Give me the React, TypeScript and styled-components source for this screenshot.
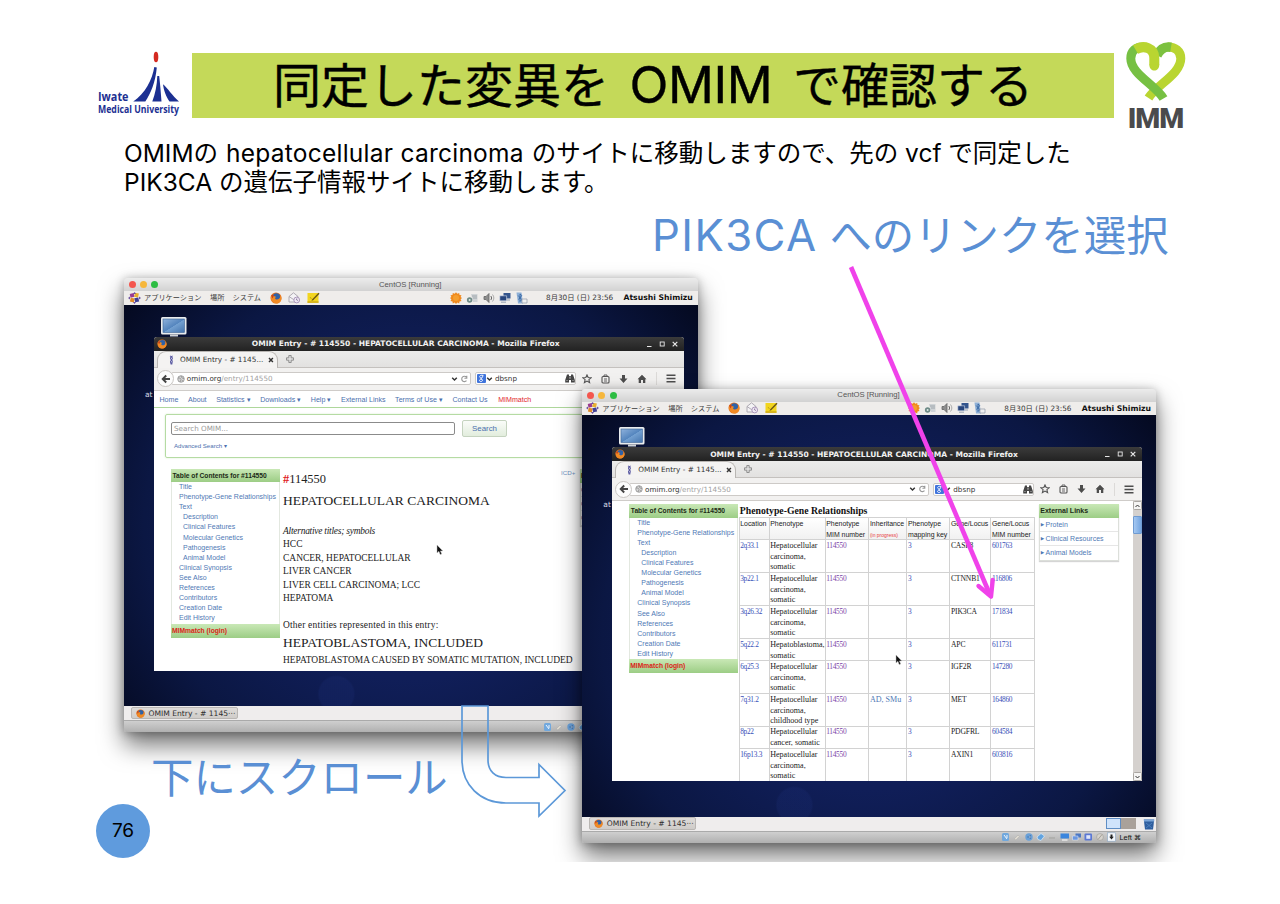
import React from "react";
import styled, { createGlobalStyle, css } from "styled-components";

const GlobalStyle = createGlobalStyle`
  body { margin: 0; background: #fff; }
  * { box-sizing: border-box; }
`;

const ui = `"DejaVu Sans", "Noto Sans CJK JP", sans-serif`;
const sans = `"Liberation Sans", Arial, sans-serif`;
const serif = `"Liberation Serif", "Times New Roman", serif`;
const round = `Inter, "Noto Sans CJK JP", sans-serif`;

/* ---------- slide ---------- */

const Slide = styled.main`
  position: relative;
  width: 1280px;
  height: 904px;
  overflow: hidden;
  background: #fff;
  font-family: ${round};
  color: #000;
`;

const Header = styled.header`
  display: flex;
  align-items: flex-start;
  height: 134px;
  padding: 45px 0 0 96px;
`;

const University = styled.div`
  width: 96px;
  height: 76px;
`;

const Banner = styled.h1`
  width: 922px;
  height: 65px;
  margin: 8px 0 0;
  background: #c4d959;
  font-size: 48px;
  font-weight: 400;
  line-height: 65px;
  text-align: center;
  white-space: pre;
  -webkit-text-stroke: 0.4px #000;
`;

const Latin = styled.span<{ $track?: number; $size?: number; $gap?: number }>`
  margin: 0 ${(p) => p.$gap ?? 0}px;
  font-size: ${(p) => p.$size ?? 1}em;
  line-height: 1;
  letter-spacing: ${(p) => p.$track ?? 0}px;
`;

const Imm = styled.div`
  display: flex;
  flex-direction: column;
  align-items: center;
  width: 83px;
  margin-top: -6px;
`;

const ImmName = styled.div`
  margin-top: 1px;
  color: #4a4a4c;
  font: 900 28.5px/29px Roboto, sans-serif;
  letter-spacing: -1px;
`;

const Lead = styled.p`
  margin: 5px 0 0 124px;
  font-size: 24.5px;
  line-height: 29px;
  white-space: pre;
`;

const Callout = styled.div<{ $x: number; $y: number }>`
  position: absolute;
  left: ${(p) => p.$x}px;
  top: ${(p) => p.$y}px;
  color: #5a8fd4;
  font-size: 42.4px;
  line-height: 54px;
  white-space: pre;
`;

const PageNumber = styled.div`
  position: absolute;
  left: 96px;
  top: 804px;
  display: flex;
  align-items: center;
  justify-content: center;
  width: 54px;
  height: 54px;
  padding-bottom: 2px;
  border-radius: 50%;
  background: #5f9bdd;
  font-size: 19px;
`;

const Canvas = styled.section`
  position: absolute;
  inset: 200px 0 42px;
  overflow: hidden;
`;

const Overlay = styled.svg`
  position: absolute;
  inset: 0;
  pointer-events: none;
`;

/* ---------- virtual machine window ---------- */

const Machine = styled.article<{ $x: number; $y: number }>`
  position: absolute;
  left: ${(p) => p.$x}px;
  top: ${(p) => p.$y}px;
  display: flex;
  flex-direction: column;
  width: 573.5px;
  height: 454px;
  border-radius: 3px 3px 2px 2px;
  background: #d6d6d6;
  box-shadow: 0 13px 24px rgba(0, 0, 0, 0.55), 0 1px 10px rgba(0, 0, 0, 0.28);
`;

const TitleBar = styled.div`
  display: flex;
  align-items: center;
  height: 13px;
  padding: 0 5px;
  border-radius: 3px 3px 0 0;
  background: linear-gradient(#ececec, #d2d2d2);
`;

const Lights = styled.div`
  display: flex;
  gap: 4.2px;
  width: 60px;
`;

const Light = styled.i<{ $c: string }>`
  width: 7px;
  height: 7px;
  border-radius: 50%;
  background: ${(p) => p.$c};
`;

const MachineTitle = styled.div`
  flex: 1;
  padding-right: 61px;
  color: #555;
  font: 7.7px/12px ${sans};
  text-align: center;
`;

const Panel = styled.div`
  display: flex;
  align-items: center;
  height: 13.7px;
  padding: 0 4px 0 4px;
  background: #efedeb;
  color: #3a3a3a;
  font: 7.2px/13px ${ui};
  white-space: nowrap;
`;

const Launcher = styled.div`
  display: flex;
  align-items: center;
  gap: 6px;
  margin-left: 8.5px;
`;

const PanelLabel = styled.span<{ $w: number }>`
  width: ${(p) => p.$w}px;
`;

const Tray = styled.div`
  display: flex;
  align-items: center;
  gap: 4px;
  margin-left: auto;
`;

const Clock = styled.span`
  width: 77.5px;
  margin-left: 14px;
  font-size: 7.3px;
`;

const User = styled.b`
  width: 70px;
  color: #111;
  font-size: 7.7px;
`;

const Desktop = styled.div`
  position: relative;
  flex: 1;
  overflow: hidden;
  padding: 32px 0 0 30px;
  background: radial-gradient(circle at 37% 97%, rgba(40, 62, 150, 0.14) 0 17px, transparent 19px),
    radial-gradient(ellipse 62% 85% at 50% 55%, #12215f 0%, #101e58 45%, #0b1743 75%, #03071a 108%);
`;

const MonitorIcon = styled.svg`
  position: absolute;
  left: 36px;
  top: 11px;
`;

const DesktopLabel = styled.span`
  position: absolute;
  left: 21px;
  top: 84px;
  color: #d8dbe6;
  font: 7.5px/11px ${ui};
`;

const TaskBar = styled.div`
  display: flex;
  align-items: center;
  justify-content: space-between;
  height: 14px;
  padding-left: 7px;
  background: #efeded;
`;

const Task = styled.div`
  display: flex;
  align-items: center;
  gap: 4px;
  width: 107px;
  height: 12.5px;
  padding-left: 3.5px;
  border: 1px solid #b9b6b3;
  border-radius: 2px;
  background: linear-gradient(#dedbd8, #cfccc9);
  color: #2d2d2d;
  font: 7.6px/11px ${ui};
  white-space: nowrap;
`;

const Pager = styled.div`
  display: flex;
  align-items: center;
  height: 14px;
`;

const Workspace = styled.i<{ $on?: boolean }>`
  width: 15px;
  height: 11.5px;
  border: 1px solid ${(p) => (p.$on ? "#5e8dc4" : "#a9a19a")};
  background: ${(p) => (p.$on ? "#cfe3fb" : "#a9a19a")};
`;

const StatusBar = styled.div`
  display: flex;
  align-items: center;
  justify-content: flex-end;
  gap: 2.6px;
  height: 12px;
  padding-right: 15px;
  border-top: 1px solid #aaa;
  border-radius: 0 0 2px 2px;
  background: linear-gradient(#cfcfcf, #b0b0b0);
  color: #111;
  font: 7.4px/11px ${sans};
`;

/* ---------- firefox ---------- */

const Browser = styled.div`
  display: flex;
  flex-direction: column;
  width: 529.5px;
  height: 334px;
  border-radius: 3px 3px 0 0;
  background: #fff;
  overflow: hidden;
`;

const Caption = styled.div`
  display: flex;
  align-items: center;
  flex: none;
  height: 14px;
  padding: 0 5px 0 3px;
  background: linear-gradient(#3b3b3b, #222);
  color: #f2f2f2;
  font: bold 7.55px/13px ${ui};
  white-space: nowrap;
`;

const CaptionText = styled.span`
  flex: 1;
  text-align: center;
`;

const TabStrip = styled.div`
  display: flex;
  align-items: flex-end;
  flex: none;
  height: 17px;
  padding-left: 3px;
  border-bottom: 1px solid #c4c1be;
  background: linear-gradient(#ececeb, #e2e1e0);
`;

const Tab = styled.div`
  display: flex;
  align-items: center;
  width: 121px;
  height: 17px;
  margin-bottom: -1px;
  padding: 0 3px 0 11px;
  border: 1px solid #b9b6b3;
  border-bottom: 0;
  border-radius: 9px 9px 0 0;
  background: #f4f3f2;
  color: #333;
  font: 7.3px/14px ${ui};
  white-space: nowrap;
`;

const TabText = styled.span`
  width: 90px;
  margin-left: 6px;
`;

const NavBar = styled.div`
  display: flex;
  align-items: center;
  flex: none;
  height: 23px;
  padding-left: 3px;
  border-bottom: 1px solid #cfccc9;
  background: #f2f1f0;
`;

const Back = styled.div`
  display: flex;
  align-items: center;
  justify-content: center;
  z-index: 1;
  width: 17px;
  height: 17px;
  border: 1px solid #c9c6c3;
  border-radius: 50%;
  background: #fcfcfc;
`;

const Field = styled.div<{ $w: number }>`
  display: flex;
  align-items: center;
  width: ${(p) => p.$w}px;
  height: 12.5px;
  border: 1px solid #cdcac7;
  border-radius: 2px;
  background: #fff;
  color: #333;
  font: 7.2px/11px ${ui};
  white-space: nowrap;
`;

const UrlField = styled(Field)`
  margin-left: -3px;
  padding: 0 1px 0 4.5px;
`;

const SearchField = styled(Field)`
  margin-left: 4px;
  padding-left: 1px;
`;

const Faint = styled.span`
  flex: 1;
  color: #a2a2a2;
`;

const Grow = styled.span`
  flex: 1;
  padding-left: 2px;
`;

const Tools = styled.div`
  display: flex;
  align-items: center;
  justify-content: space-between;
  width: 94px;
  margin-left: 6px;
`;

const Divider = styled.i`
  width: 1px;
  height: 13px;
  background: #dcdad8;
`;

const Viewport = styled.div`
  position: relative;
  flex: 1;
  display: flex;
  flex-direction: column;
  overflow: hidden;
  background: #fff;
`;

const Cursor = styled.svg<{ $x: number; $y: number }>`
  position: absolute;
  left: ${(p) => p.$x}px;
  top: ${(p) => p.$y}px;
`;

/* ---------- OMIM page ---------- */

const SiteNav = styled.nav`
  display: flex;
  align-items: center;
  gap: 9.6px;
  flex: none;
  height: 17px;
  padding: 3px 0 0 5.5px;
  border-bottom: 1px solid #aed79b;
  color: #4b6fae;
  font: 7.1px/13px ${sans};
  white-space: nowrap;
`;

const Hot = styled.span`
  padding-left: 1px;
  color: #e2272b;
`;

const SearchBox = styled.div`
  flex: none;
  height: 44px;
  margin: 6px 11px 0;
  padding: 5px 0 0 5px;
  border: 1px solid #b5dba3;
  border-radius: 2px;
  box-shadow: 0 0 2px #d5ecca;
  color: #4b6fae;
  font: 6.1px/12px ${sans};
`;

const SearchRow = styled.div`
  display: flex;
  align-items: center;
  gap: 7px;
  margin-bottom: 3px;
`;

const SearchInput = styled.div`
  width: 284px;
  height: 13px;
  padding-left: 2px;
  border: 1px solid #8b8b8b;
  border-radius: 2px;
  color: #999;
  font: 7.2px/11px ${ui};
`;

const SearchButton = styled.div`
  width: 45px;
  height: 17px;
  border: 1px solid #c5d3bf;
  border-radius: 2px;
  background: linear-gradient(#fafcf9, #e2eddd);
  color: #4b6fae;
  font: 7.9px/15px ${sans};
  text-align: center;
`;

const Advanced = styled.div`
  padding-left: 3px;
`;

const Columns = styled.div<{ $top: number }>`
  display: flex;
  align-items: flex-start;
  flex: none;
  padding: ${(p) => p.$top}px 0 0 17px;
`;

const greenHead = css`
  background: linear-gradient(#c9e8b6, #9ccd85);
  font: bold 7px/13px ${sans};
`;

const Contents = styled.aside`
  flex: none;
  width: 108.5px;
  border: 1px solid #e3e8e0;
  font: 7px/10.09px ${sans};
  color: #4f79b5;
  white-space: nowrap;
`;

const ContentsHead = styled.div`
  height: 13.4px;
  margin: -1px -1px 0;
  padding-left: 1.5px;
  color: #1c2b16;
  ${greenHead}
  font-size: 6.7px;
`;

const ContentsList = styled.div`
  height: 141.6px;
`;

const ContentsItem = styled.div<{ $sub?: boolean }>`
  padding-left: ${(p) => (p.$sub ? 11 : 7)}px;
`;

const ContentsFoot = styled.div`
  height: 14px;
  margin: 0 -1px -1px;
  padding-left: 1px;
  ${greenHead}
  color: #dc2418;
  font-size: 6.7px;
`;

const Entry = styled.div`
  position: relative;
  flex: none;
  width: 300px;
  padding: 3px 0 0 3.5px;
  color: #222;
  font: 9.46px/13.5px ${serif};
  white-space: nowrap;
`;

const Number = styled.div`
  height: 16px;
  font-size: 12.4px;
  line-height: 14px;
`;

const Hash = styled.b`
  color: #e0201c;
`;

const EntryName = styled.div<{ $before?: number; $after?: number }>`
  margin: ${(p) => p.$before ?? 0}px 0 ${(p) => p.$after ?? 0}px;
  font-size: 13.5px;
  line-height: 20px;
`;

const AltLabel = styled.i`
  display: block;
  letter-spacing: -0.25px;
`;

const Other = styled.div`
  margin-top: 13.5px;
  letter-spacing: 0.2px;
`;

const Icd = styled.span`
  position: absolute;
  left: 281.5px;
  top: -2px;
  color: #6f93c4;
  font: 6.2px/12px ${sans};
`;

const SideLinks = styled.aside<{ $ml: number }>`
  flex: none;
  width: 80.5px;
  margin-left: ${(p) => p.$ml}px;
  border: 1px solid #dcdfda;
  border-top: 0;
  box-shadow: 0 1px 1px #d5d5d5;
  color: #4f79b5;
  font: 7px/14px ${sans};
`;

const SideHead = styled.div`
  height: 14px;
  margin: 0 -1px;
  padding-left: 1.5px;
  color: #1c2b16;
  ${greenHead}
`;

const SideItem = styled.div`
  height: 14px;
  padding-left: 1px;
  border-bottom: 1px solid #e6e6e6;
  &:last-child { border: 0; }
`;

const Bullet = styled.span`
  display: inline-block;
  width: 4.8px;
  font: 4.5px/10px ${ui};
  vertical-align: 1px;
`;

const Relations = styled.div`
  flex: none;
  width: 296px;
  margin-left: 1px;
`;

const RelationsTitle = styled.h2`
  height: 13px;
  margin: 0;
  padding-left: 1px;
  color: #111;
  font: bold 9.75px/13px ${serif};
  white-space: nowrap;
`;

const Row = styled.div<{ $head?: boolean; $h: number }>`
  display: grid;
  grid-template-columns: 30px 56px 43.7px 38px 43px 41px 44px;
  height: ${(p) => p.$h}px;
  border-top: 1px solid #d2d2d2;
  border-left: 1px solid #d2d2d2;
  color: #222;
  font: ${(p) => (p.$head ? `6.95px/11px ${sans}` : `8.05px/10.8px ${serif}`)};
  background: ${(p) => (p.$head ? "linear-gradient(#fff, #f1f1f1)" : "#fff")};
  white-space: nowrap;
`;

const Cell = styled.div<{ $c?: string; $num?: boolean }>`
  padding: 0.6px 0 0 0.4px;
  border-right: 1px solid #d2d2d2;
  color: ${(p) => p.$c ?? "inherit"};
  ${(p) => p.$num && "font-size: 7.4px; letter-spacing: -0.3px;"}
`;

const HeadCell = styled(Cell)`
  padding-top: 0;
`;

const Gene = styled(Cell)`
  font-size: 7.6px;
  letter-spacing: -0.1px;
`;

const Progress = styled.small`
  color: #e8393c;
  font-size: 5px;
`;

const ScrollTrack = styled.div`
  position: absolute;
  right: 0;
  top: 0;
  bottom: 0;
  display: flex;
  flex-direction: column;
  justify-content: space-between;
  width: 9px;
  background: #d5d1ce;
`;

const ScrollButton = styled.div`
  display: flex;
  align-items: center;
  justify-content: center;
  height: 9px;
  border: 1px solid #aaa6a2;
  border-radius: 1.5px;
  background: #f5f4f3;
`;

const Thumb = styled.div`
  height: 17.5px;
  margin: 6px 0 auto;
  border: 1px solid #6f9bd2;
  border-radius: 1px;
  background: linear-gradient(90deg, #a5c8f2, #74a5e0);
`;

/* ---------- icons ---------- */

const FoxIcon = ({ s = 11 }: { s?: number }) => (
  <svg width={s} height={s} viewBox="0 0 12 12">
    <circle cx="6" cy="6" r="5.5" fill="#e2701f" />
    <circle cx="6.4" cy="5" r="3.7" fill="#2f62a8" />
    <path d="M1 4C2 2.6 3.5 4 5 4.2c1 .3 1 1.4 0 1.7.3 1.5 2 2 3.6 1.2 1.3-.8 2-2.5 1.8-4.1 2.2 3.3.9 7-2.2 8.2C4 12.5.2 8.7 1 4z" fill="#f08a24" />
    <path d="M1.2 3.6C2 2.3 3.2 3.3 4 3.6L2.4 6.4z" fill="#c8401a" />
  </svg>
);

const PanelLogo = () => (
  <svg width="13" height="12" viewBox="0 0 13 12">
    <rect x="2" y="1.5" width="4" height="3.8" fill="#9a3b90" transform="rotate(-12 4 3)" />
    <rect x="6.5" y="1" width="4" height="4" fill="#e8b030" transform="rotate(12 8 3)" />
    <rect x="2.3" y="6" width="4" height="4" fill="#e08a28" transform="rotate(12 4 8)" />
    <rect x="6.8" y="5.8" width="4" height="4" fill="#3f3f96" transform="rotate(-12 9 8)" />
    <path d="M0 6l2-1.5v3zM13 6l-2-1.5v3zM6.500 0L8 2H5zM6.500 12L8 10H5z" fill="#6b4fa0" />
  </svg>
);

const MailIcon = () => (
  <svg width="13" height="12" viewBox="0 0 13 12" fill="none" stroke="#a7a3ab" strokeWidth=".9">
    <path d="M1 4.5L5.500.8 10 4.500V10H1z" fill="#f4f3f5" />
    <path d="M1 4.5l4.500 3 4.500-3" />
    <circle cx="8.7" cy="8" r="2.9" fill="#eee8f3" stroke="#a48fb4" />
    <path d="M8.7 6.5V8l1 .6" stroke="#806d94" />
  </svg>
);

const NoteIcon = () => (
  <svg width="13" height="12" viewBox="0 0 13 12">
    <rect x=".5" y="1" width="11" height="9.8" fill="#f2d51f" />
    <path d="M.5 9.3h11v1.5H.5z" fill="#d0ab18" />
    <path d="M5 7.6L11.5.8l1 1L6.2 8.2l-1.7.5z" fill="#6b5512" />
    <path d="M3 5l1.500 2" stroke="#c3a51a" />
  </svg>
);

const SunIcon = () => (
  <svg width="12" height="12" viewBox="0 0 12 12">
    <path d="M6 .2l1.300 1.600L9.200.9l.3 2 2 .3-.9 1.900L12 6l-1.400 1.200.9 1.800-2 .4-.3 2-1.900-.9L6 12l-1.300-1.500-1.900.9-.3-2-2-.4.9-1.800L0 6l1.400-.9-.9-1.900 2-.3.3-2 1.900.9z" fill="#f08a1d" />
    <circle cx="6" cy="6" r="3" fill="#f59f2f" />
  </svg>
);

const SyncIcon = () => (
  <svg width="13" height="12" viewBox="0 0 13 12">
    <path d="M5 2h6.500v8H7z" fill="#cfd3d6" />
    <path d="M6 4h5M7 6h4" stroke="#9ea6ab" />
    <circle cx="3.6" cy="8" r="2.7" fill="#6d8a86" />
    <circle cx="3.6" cy="8" r="1" fill="#dfe9e6" />
  </svg>
);

const SoundIcon = () => (
  <svg width="12" height="12" viewBox="0 0 12 12" fill="none" stroke="#666">
    <path d="M1 4.500h2L6 1.500v9L3 7.500H1z" fill="#8d8d8d" strokeWidth=".8" />
    <path d="M7.800 4c1 1.300 1 2.700 0 4" strokeWidth="1" />
    <path d="M9.500 2.500c1.800 2.200 1.800 4.800 0 7" stroke="#aaa" strokeWidth="1" />
  </svg>
);

const NetIcon = () => (
  <svg width="12" height="12" viewBox="0 0 12 12">
    <path d="M4.500 1h7v5.500h-7z" fill="#34558d" />
    <path d="M.8 3.800h6.800v5H.8z" fill="#27457c" stroke="#d5deeb" strokeWidth=".6" />
    <path d="M2 10.200h5M8 8h3" stroke="#98a3b3" />
  </svg>
);

const BluetoothIcon = () => (
  <svg width="13" height="12" viewBox="0 0 13 12">
    <path d="M1.500.5h5l1.500 11h-5z" fill="#8fb0d6" />
    <path d="M3.200 3.500l3.600 4.200L5 9.500V2l1.800 1.500-3.300 4" fill="none" stroke="#2f5f9e" strokeWidth=".8" />
    <path d="M7 7h5v4H7z" fill="#f0f0f0" stroke="#8f9aa6" strokeWidth=".7" />
  </svg>
);

const Monitor = () => (
  <MonitorIcon width="28" height="21" viewBox="0 0 28 21">
    <defs>
      <linearGradient id="screen" x2="1" y2="1">
        <stop offset="0" stopColor="#8fb2dc" />
        <stop offset=".5" stopColor="#5485be" />
        <stop offset=".52" stopColor="#73a0d1" />
        <stop offset="1" stopColor="#4575ae" />
      </linearGradient>
    </defs>
    <rect x="1" y="1" width="25.5" height="17.5" rx="1.5" fill="#e9ecee" />
    <rect x="3" y="3" width="21.5" height="13.5" fill="url(#screen)" stroke="#3e6596" strokeWidth=".6" />
    <path d="M10 18.500h8v2h-8z" fill="#cfd3d6" />
  </MonitorIcon>
);

const WindowControls = () => (
  <svg width="34" height="12" viewBox="0 0 34 12" fill="none" stroke="#e8e8e8">
    <path d="M2 8.500h4.500" strokeWidth="1.2" />
    <rect x="15.2" y="4" width="4" height="4" strokeWidth=".9" />
    <path d="M27.700 3.800l4.600 4.600M32.300 3.800l-4.600 4.600" strokeWidth="1.2" />
  </svg>
);

const Favicon = () => (
  <svg width="5" height="10" viewBox="0 0 5 10" fill="none" stroke="#5a5aa2" strokeWidth="1.1">
    <path d="M1 .8c3 1.600 3 2.600 1.500 4.200C1 6.600 1 7.600 3.500 9.200M3.700.8C1 2.500 1 3.400 2.500 5 4 6.500 3.500 8 1.500 9.200" />
  </svg>
);

const CloseX = () => (
  <svg width="6" height="6" viewBox="0 0 6 6">
    <path d="M1 1l4 4M5 1L1 5" stroke="#333" strokeWidth="1.5" />
  </svg>
);

const PlusShape = styled.svg`
  margin: 0 0 3px 6.5px;
`;

const PlusIcon = () => (
  <PlusShape width="10" height="10" viewBox="0 0 10 10">
    <path d="M3.800 1.500h2.400v2.300H8.500v2.400H6.200v2.300H3.800V6.200H1.500V3.800h2.300z" fill="#ddd" stroke="#888" strokeWidth=".9" />
  </PlusShape>
);

const BackArrow = () => (
  <svg width="10" height="10" viewBox="0 0 10 10" fill="none" stroke="#444" strokeWidth="1.9">
    <path d="M9 5H2M5.200 1.500L1.700 5l3.500 3.500" />
  </svg>
);

const GlobeIcon = () => (
  <svg width="8" height="8" viewBox="0 0 8 8" fill="#d5d5d5" stroke="#888" strokeWidth=".7">
    <circle cx="4" cy="4" r="3.3" />
    <path d="M1 3h2l1 1.500L3 7M4 .8L5 3l2 .6M5 5l1 1.500" fill="none" />
  </svg>
);

const ChevronIcon = () => (
  <svg width="7" height="8" viewBox="0 0 7 8" fill="none" stroke="#333" strokeWidth="1.4">
    <path d="M1.200 2.700L3.500 5.100l2.300-2.400" />
  </svg>
);

const ReloadIcon = () => (
  <svg width="9" height="8" viewBox="0 0 9 8" fill="none" stroke="#999" strokeWidth="1.1">
    <path d="M6.300 2A2.700 2.700 0 1 0 6.500 5.700M6.800.8v2.500H4.400" />
  </svg>
);

const EngineIcon = () => (
  <svg width="9" height="9" viewBox="0 0 9 9">
    <rect width="9" height="9" rx="1" fill="#3f74dc" />
    <path d="M6.500 1.300H4.300c-2.200.2-2.200 2.600 0 2.700C2.500 4.300 5.800 5 5.500 6.500 5.100 8 2.300 7.800 2.500 6.400c.2-1 1.500-1.300 2.500-1.200M4.300 4c1.900-.3 1.700-2.300.5-2.700" fill="none" stroke="#fff" strokeWidth=".9" />
  </svg>
);

const Binoculars = () => (
  <svg width="10" height="9" viewBox="0 0 10 9" fill="#454545">
    <path d="M2 .5h2V2h2V.5h2L9.800 6v2.500H6V6H4v2.500H.2V6z" />
    <path d="M1.500 6.500h1M7.500 6.500h1M5 2.500v2.300" stroke="#ddd" strokeWidth=".8" />
  </svg>
);

const StarIcon = () => (
  <svg width="10" height="10" viewBox="0 0 10 10" fill="none" stroke="#555" strokeWidth="1.1">
    <path d="M5 .9l1.200 2.600 2.900.3-2.200 1.900.7 2.900L5 7.100 2.400 8.600l.7-2.900L.9 3.800l2.900-.3z" />
  </svg>
);

const ClipIcon = () => (
  <svg width="9" height="10" viewBox="0 0 9 10" fill="none" stroke="#555" strokeWidth="1.1">
    <rect x="1" y="2.5" width="7" height="6.5" rx="1" />
    <path d="M3 2.500V1h3v1.500M3 5h3M3 7h3" strokeWidth=".9" />
  </svg>
);

const DownIcon = () => (
  <svg width="9" height="10" viewBox="0 0 9 10" fill="#4d4d4d">
    <path d="M3 1h3v3.500h2.500L4.500 9 .5 4.500H3z" />
  </svg>
);

const HomeIcon = () => (
  <svg width="10" height="10" viewBox="0 0 10 10" fill="#4d4d4d">
    <path d="M5 .8l4.500 4.500H8.300V9H6V6H4v3H1.700V5.300H.5z" />
  </svg>
);

const MenuIcon = () => (
  <svg width="10" height="9" viewBox="0 0 10 9" stroke="#4d4d4d" strokeWidth="1.6">
    <path d="M.5 1.300h9M.5 4.500h9M.5 7.700h9" />
  </svg>
);

const Pointer = ({ x, y }: { x: number; y: number }) => (
  <Cursor $x={x} $y={y} width="8" height="12" viewBox="0 0 8 12">
    <path d="M1 1v8l1.900-1.700L4.200 10.600l1.500-.6-1.300-3.100h2.400z" fill="#111" stroke="#bbb" strokeWidth=".5" />
  </Cursor>
);

const TrashShape = styled.svg`
  margin: 0 1px 0 7px;
`;

const TrashIcon = () => (
  <TrashShape width="12" height="12" viewBox="0 0 12 12">
    <path d="M.8 1.500h10.400l-1.200 10H2z" fill="#2f5f9f" />
    <path d="M.8 1.500h10.400v2H1z" fill="#7ba6d8" />
    <path d="M3 5l6 5M9 5l-6 5" stroke="#4d7fbd" />
  </TrashShape>
);

const StatusIcons = () => (
  <svg width="116" height="10" viewBox="0 0 116 10">
    <rect x="1" y="1" width="7" height="8" rx="1.5" fill="#71a8dd" />
    <path d="M3 3l3 4M6 3v3" stroke="#eef6ff" />
    <path d="M13 7l4-4 1.500 1.500L15 8z" fill="#dedad0" stroke="#aaa" strokeWidth=".5" />
    <circle cx="28" cy="5" r="3.7" fill="#69a0d8" />
    <path d="M26 5h2l1.500-2v4L28 5" fill="#fff" stroke="#2b5c9b" strokeWidth=".5" />
    <path d="M36 5l4-3.500L43.500 4 40 8.500l-3-1z" fill="#62a3df" stroke="#dcecf9" strokeWidth=".7" />
    <path d="M48 6h6" stroke="#b0b0ae" strokeWidth="2" />
    <path d="M59.500 1.500h8.500v5h-8.500z" fill="#3b86dd" />
    <path d="M61 8h5.500" stroke="#eee" strokeWidth="1.3" />
    <path d="M74.500 1.500H80v4h-5.500z" fill="#4b77c4" />
    <path d="M71.500 4H77v4h-5.500z" fill="#6b97df" stroke="#e6eefb" strokeWidth=".5" />
    <rect x="83.5" y="1.5" width="7.5" height="7" rx="1" fill="#5b78d4" />
    <rect x="85.3" y="3.2" width="4" height="3.6" fill="#dfe7fb" />
    <circle cx="99" cy="5" r="3.4" fill="#d6d3cd" stroke="#9a9894" strokeWidth=".6" />
    <path d="M97 7.500l4-5" stroke="#a19e98" />
    <rect x="106.5" y=".8" width="8" height="8.4" fill="#f3f7fb" stroke="#89a5c4" strokeWidth=".6" />
    <path d="M109.500 2.500h2v2.300h1.300l-2.300 2.700-2.300-2.700h1.300z" fill="#222" />
  </svg>
);

const Emblem = styled.svg`
  display: block;
  overflow: visible;
  font-family: "Open Sans", sans-serif;
  font-weight: 700;
`;

const UniversityLogo = () => (
  <Emblem width="88" height="76" viewBox="96 45 88 76" fill="#1c3092">
    <ellipse cx="156" cy="57" rx="2.3" ry="5.3" fill="#d42a20" />
    <path d="M154.300 67C152.500 79 145 94 133.300 101.400h12C150.500 94 155.500 82 156.800 67.400z" />
    <path d="M157.300 76c-.3 9-2 18-5 25.400h9.200c-.6-8-1.300-17-2.300-25.400z" />
    <path d="M163 84.300c4.500 3.500 9.500 12 16 17.100h-9.500c-3.200-4-5.800-11-6.500-17.100z" />
    <text x="98" y="101.3" fontSize="12.3" textLength="30.5" lengthAdjust="spacingAndGlyphs">Iwate</text>
    <text x="98" y="113.3" fontSize="10.3" textLength="81" lengthAdjust="spacingAndGlyphs">Medical University</text>
  </Emblem>
);

const HeartLogo = () => (
  <svg width="62" height="64" viewBox="1125 39 62 64" fill="none">
    <path d="M1148.500 98C1157 84.500 1180.800 74 1180.800 58.500c0-7.500-6-11.800-13-11.500" stroke="#b9d531" strokeWidth="9" />
    <path d="M1171 47.300c-6-1-11 2-14 8" stroke="#7cc13f" strokeWidth="9.500" />
    <path d="M1163.500 98.500C1155 84.500 1130.800 74 1130.800 58.500c0-7.500 5-11.500 12-11.500" stroke="#76c043" strokeWidth="9" />
    <path d="M1135.500 49.500C1144 44.500 1154.300 48 1154.300 58v7" stroke="#b9d531" strokeWidth="10" />
    <path d="M1149.300 64.500h10c0 8-10 8-10 0z" fill="#b9d531" />
  </svg>
);

/* ---------- data ---------- */

const siteLinks = ["Home", "About", "Statistics ▾", "Downloads ▾", "Help ▾", "External Links", "Terms of Use ▾", "Contact Us"];

const contents: [string, boolean?][] = [
  ["Title"],
  ["Phenotype-Gene Relationships"],
  ["Text"],
  ["Description", true],
  ["Clinical Features", true],
  ["Molecular Genetics", true],
  ["Pathogenesis", true],
  ["Animal Model", true],
  ["Clinical Synopsis"],
  ["See Also"],
  ["References"],
  ["Contributors"],
  ["Creation Date"],
  ["Edit History"],
];

const altTitles = ["HCC", "CANCER, HEPATOCELLULAR", "LIVER CANCER", "LIVER CELL CARCINOMA; LCC", "HEPATOMA"];

const hcc = ["Hepatocellular", "carcinoma,", "somatic"];

const genes: { loc: string; name: string[]; inh?: string; gene: string; mim: string; h: number }[] = [
  { loc: "2q33.1", name: hcc, gene: "CASP8", mim: "601763", h: 33 },
  { loc: "3p22.1", name: hcc, gene: "CTNNB1", mim: "116806", h: 33 },
  { loc: "3q26.32", name: hcc, gene: "PIK3CA", mim: "171834", h: 33 },
  { loc: "5q22.2", name: ["Hepatoblastoma,", "somatic"], gene: "APC", mim: "611731", h: 22 },
  { loc: "6q25.3", name: hcc, gene: "IGF2R", mim: "147280", h: 33 },
  { loc: "7q31.2", name: ["Hepatocellular", "carcinoma,", "childhood type"], inh: "AD, SMu", gene: "MET", mim: "164860", h: 32.5 },
  { loc: "8p22", name: ["Hepatocellular", "cancer, somatic"], gene: "PDGFRL", mim: "604584", h: 22.5 },
  { loc: "16p13.3", name: hcc, gene: "AXIN1", mim: "603816", h: 35 },
];

/* ---------- composed parts ---------- */

const lines = (items: string[]) => items.map((t) => <div key={t}>{t}</div>);

const TableOfContents = () => (
  <Contents>
    <ContentsHead>Table of Contents for #114550</ContentsHead>
    <ContentsList>
      {contents.map(([label, sub]) => (
        <ContentsItem key={label} $sub={sub}>{label}</ContentsItem>
      ))}
    </ContentsList>
    <ContentsFoot>MIMmatch (login)</ContentsFoot>
  </Contents>
);

const ExternalLinks = ({ ml }: { ml: number }) => (
  <SideLinks $ml={ml}>
    <SideHead>External Links</SideHead>
    {["Protein", "Clinical Resources", "Animal Models"].map((t) => (
      <SideItem key={t}><Bullet>▶</Bullet>{t}</SideItem>
    ))}
  </SideLinks>
);

const FirefoxWindow = ({ children }: { children: React.ReactNode }) => (
  <Browser>
    <Caption>
      <FoxIcon s={10} />
      <CaptionText>OMIM Entry - # 114550 - HEPATOCELLULAR CARCINOMA - Mozilla Firefox</CaptionText>
      <WindowControls />
    </Caption>
    <TabStrip>
      <Tab><Favicon /><TabText>OMIM Entry - # 1145...</TabText><CloseX /></Tab>
      <PlusIcon />
    </TabStrip>
    <NavBar>
      <Back><BackArrow /></Back>
      <UrlField $w={300}><GlobeIcon />&nbsp;omim.org<Faint>/entry/114550</Faint><ChevronIcon />&nbsp;<ReloadIcon /></UrlField>
      <SearchField $w={101}><EngineIcon /><ChevronIcon /><Grow>dbsnp</Grow><Binoculars /></SearchField>
      <Tools><StarIcon /><ClipIcon /><DownIcon /><HomeIcon /><Divider /><MenuIcon /></Tools>
    </NavBar>
    <Viewport>{children}</Viewport>
  </Browser>
);

const VirtualMachine = ({ x, y, children }: { x: number; y: number; children: React.ReactNode }) => (
  <Machine $x={x} $y={y}>
    <TitleBar>
      <Lights><Light $c="#f4564e" /><Light $c="#f6b73c" /><Light $c="#2dbd43" /></Lights>
      <MachineTitle>CentOS [Running]</MachineTitle>
    </TitleBar>
    <Panel>
      <PanelLogo />
      &nbsp;&#8202;
      <PanelLabel $w={66}>アプリケーション</PanelLabel>
      <PanelLabel $w={22.5}>場所</PanelLabel>
      <PanelLabel $w={29}>システム</PanelLabel>
      <Launcher><FoxIcon s={12} /><MailIcon /><NoteIcon /></Launcher>
      <Tray>
        <SunIcon /><SyncIcon /><SoundIcon /><NetIcon /><BluetoothIcon />
        <Clock>8月30日 (日) 23:56</Clock>
      </Tray>
      <User>Atsushi Shimizu</User>
    </Panel>
    <Desktop>
      <Monitor />
      <DesktopLabel>at</DesktopLabel>
      {children}
    </Desktop>
    <TaskBar>
      <Task><FoxIcon s={9} />OMIM Entry - # 1145···</Task>
      <Pager><Workspace $on /><Workspace /><TrashIcon /></Pager>
    </TaskBar>
    <StatusBar><StatusIcons />Left ⌘</StatusBar>
  </Machine>
);

const EntryPage = () => (
  <>
    <SiteNav>{siteLinks.map((t) => <span key={t}>{t}</span>)}<Hot>MIMmatch</Hot></SiteNav>
    <SearchBox>
      <SearchRow><SearchInput>Search OMIM...</SearchInput><SearchButton>Search</SearchButton></SearchRow>
      <Advanced>Advanced Search ▾</Advanced>
    </SearchBox>
    <Columns $top={11}>
      <TableOfContents />
      <Entry>
        <Icd>ICD+</Icd>
        <Number><Hash>#</Hash>114550</Number>
        <EntryName $before={3} $after={14}>HEPATOCELLULAR CARCINOMA</EntryName>
        <AltLabel>Alternative titles; symbols</AltLabel>
        {lines(altTitles)}
        <Other>Other entities represented in this entry:</Other>
        <EntryName $after={1}>HEPATOBLASTOMA, INCLUDED</EntryName>
        <div>HEPATOBLASTOMA CAUSED BY SOMATIC MUTATION, INCLUDED</div>
      </Entry>
      <ExternalLinks ml={0} />
    </Columns>
    <Pointer x={282} y={153} />
  </>
);

const purple = "#7b3fa8";
const blue = "#3a50b8";

const RelationsPage = () => (
  <>
    <Columns $top={3}>
      <TableOfContents />
      <Relations>
        <RelationsTitle>Phenotype-Gene Relationships</RelationsTitle>
        <Row $head $h={22}>
          <HeadCell>Location</HeadCell>
          <HeadCell>Phenotype</HeadCell>
          <HeadCell>{lines(["Phenotype", "MIM number"])}</HeadCell>
          <HeadCell>Inheritance<br /><Progress>(in progress)</Progress></HeadCell>
          <HeadCell>{lines(["Phenotype", "mapping key"])}</HeadCell>
          <HeadCell>Gene/Locus</HeadCell>
          <HeadCell>{lines(["Gene/Locus", "MIM number"])}</HeadCell>
        </Row>
        {genes.map((g) => (
          <Row key={g.loc} $h={g.h}>
            <Cell $c={blue} $num>{g.loc}</Cell>
            <Cell>{lines(g.name)}</Cell>
            <Cell $c={purple} $num>114550</Cell>
            <Cell $c="#4f79b5">{g.inh}</Cell>
            <Cell $c={blue} $num>3</Cell>
            <Gene>{g.gene}</Gene>
            <Cell $c={blue} $num>{g.mim}</Cell>
          </Row>
        ))}
      </Relations>
      <ExternalLinks ml={4} />
    </Columns>
    <ScrollTrack>
      <ScrollButton><svg width="5" height="4" viewBox="0 0 5 4"><path d="M.5 3l2-2 2 2" fill="none" stroke="#333" /></svg></ScrollButton>
      <Thumb />
      <ScrollButton><svg width="5" height="4" viewBox="0 0 5 4"><path d="M.5 1l2 2 2-2" fill="none" stroke="#333" /></svg></ScrollButton>
    </ScrollTrack>
    <Pointer x={283} y={153} />
  </>
);

export default function App() {
  return (
    <Slide>
      <GlobalStyle />
      <Header>
        <University><UniversityLogo /></University>
        <Banner>同定した変異を <Latin $size={1.06} $track={-0.4} $gap={7}>OMIM</Latin> で確認する</Banner>
        <Imm><HeartLogo /><ImmName>IMM</ImmName></Imm>
      </Header>
      <Lead>
        OMIMの <Latin $track={0.25} $gap={1}>hepatocellular carcinoma</Latin> のサイトに移動しますので、先の <Latin>vcf</Latin> で同定した{"\n"}PIK3CA の遺伝子情報サイトに移動します。
      </Lead>
      <Canvas>
        <VirtualMachine x={124} y={78}><FirefoxWindow><EntryPage /></FirefoxWindow></VirtualMachine>
        <VirtualMachine x={582.3} y={188.6}><FirefoxWindow><RelationsPage /></FirefoxWindow></VirtualMachine>
      </Canvas>
      <Callout $x={652} $y={208.5}><Latin $size={1.03} $track={1.4}>PIK3CA</Latin> へのリンクを選択</Callout>
      <Callout $x={151} $y={751}>下にスクロール</Callout>
      <PageNumber>76</PageNumber>
      <Overlay width="1280" height="904" viewBox="0 0 1280 904" fill="none">
        <path d="M462 706h26v54c0 11 7 17.500 18 17.500h33v-13l26 26-26 25.500v-13h-33c-26 0-44-18-44-43z" stroke="#5c98d8" strokeWidth="1.7" />
        <g stroke="#f042ea" strokeLinecap="round" strokeLinejoin="round">
          <path d="M851 267l139.500 329" strokeWidth="4.6" strokeLinecap="butt" />
          <path d="M978.500 586l12.500 10.500 1.700-16.500" strokeWidth="4.4" />
        </g>
      </Overlay>
    </Slide>
  );
}
